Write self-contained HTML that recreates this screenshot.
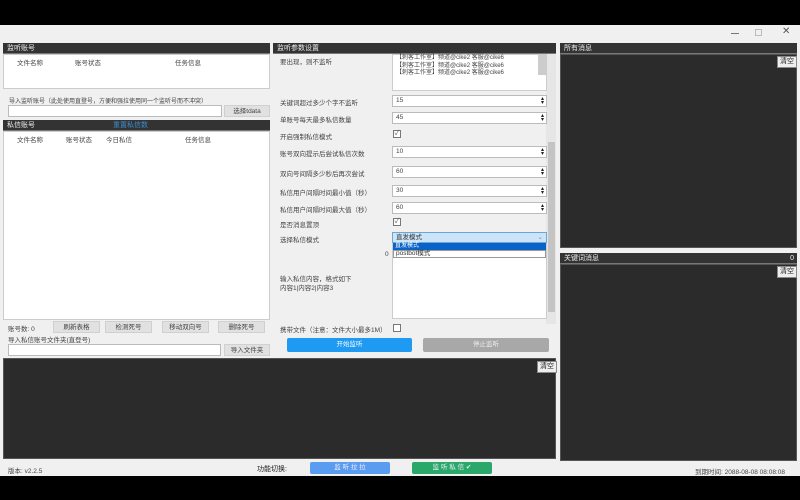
<!DOCTYPE html>
<html><head><meta charset="utf-8"><style>
*{margin:0;padding:0;box-sizing:border-box}
body{width:800px;height:500px;background:#000;position:relative;overflow:hidden;font-family:"Liberation Sans","Noto Sans CJK SC",sans-serif;font-size:7px;color:#333}
.a{position:absolute}
.win{left:0;top:25px;width:800px;height:451px;background:#f0f0f0}
.hd{background:#333;color:#eee;font-size:7px;line-height:11px;padding-left:4px;height:11px;border-bottom:1px solid #777}
.wh{background:#fff;border:1px solid #ccc}
.dk{background:#2b2b2b;border:1px solid #555}
.btn{background:#e1e1e1;border:1px solid #d0d0d0;text-align:center;line-height:11px;color:#444;font-size:6.5px}
.inp{background:#fff;border:1px solid #bbb;height:12px;line-height:10px;padding-left:3px;font-size:6.5px;color:#444}
.clr{background:#eee;color:#222;font-size:7px;line-height:10px;padding:0 2px;border:1px solid #888}
.lb{font-size:6.5px;color:#444}
.sp{position:absolute;right:2px;top:1px;font-size:6px;line-height:4px;color:#222}
.cb{width:8px;height:8px;border:1px solid #777;background:#fff;font-size:7px;line-height:6px;text-align:center;color:#555}
</style></head><body>
<div class="a win"></div>
<div class="a" style="left:731px;top:33px;width:8px;border-top:1px solid #777"></div>
<div class="a" style="left:755px;top:29px;width:7px;height:7px;border:1px solid #bbb"></div>
<div class="a" style="left:782px;top:26px;font-size:10px;color:#555">✕</div>

<!-- left -->
<div class="a hd" style="left:3px;top:43px;width:267px">监听账号</div>
<div class="a wh" style="left:3px;top:54px;width:267px;height:35px"></div>
<div class="a lb" style="left:17px;top:57px">文件名称</div>
<div class="a lb" style="left:75px;top:57px">账号状态</div>
<div class="a lb" style="left:175px;top:57px">任务信息</div>
<div class="a lb" style="left:9px;top:96px;font-size:6px">导入监听账号（此处使用直登号，方便和强拉使用同一个监听号而不冲突）</div>
<div class="a inp" style="left:8px;top:105px;width:214px"></div>
<div class="a btn" style="left:224px;top:105px;width:46px;height:12px">选择tdata</div>
<div class="a hd" style="left:3px;top:120px;width:267px">私信账号<span style="color:#3a8fd0;margin-left:78px">重置私信数</span></div>
<div class="a wh" style="left:3px;top:131px;width:267px;height:189px"></div>
<div class="a lb" style="left:17px;top:134px">文件名称</div>
<div class="a lb" style="left:66px;top:134px">账号状态</div>
<div class="a lb" style="left:106px;top:134px">今日私信</div>
<div class="a lb" style="left:185px;top:134px">任务信息</div>
<div class="a lb" style="left:8px;top:323px">账号数: 0</div>
<div class="a btn" style="left:53px;top:321px;width:47px;height:12px">刷新表格</div>
<div class="a btn" style="left:105px;top:321px;width:47px;height:12px">检测死号</div>
<div class="a btn" style="left:162px;top:321px;width:47px;height:12px">移动双向号</div>
<div class="a btn" style="left:218px;top:321px;width:47px;height:12px">删除死号</div>
<div class="a lb" style="left:8px;top:334px">导入私信账号文件夹(直登号)</div>
<div class="a inp" style="left:8px;top:344px;width:213px"></div>
<div class="a btn" style="left:224px;top:344px;width:46px;height:12px">导入文件夹</div>

<!-- bottom log -->
<div class="a dk" style="left:3px;top:358px;width:553px;height:101px"></div>
<div class="a clr" style="left:537px;top:361px">清空</div>

<!-- middle -->
<div class="a hd" style="left:273px;top:43px;width:283px">监听参数设置</div>
<div class="a" style="left:546px;top:54px;width:10px;height:270px;background:#e6e6e6"></div>
<div class="a" style="left:548px;top:142px;width:7px;height:170px;background:#c4c4c4"></div>
<div class="a lb" style="left:280px;top:56px">要出现，则不监听</div>
<div class="a wh" style="left:392px;top:54px;width:155px;height:37px;font-size:6px;line-height:7.5px;padding-left:3px;color:#444">【刺客工作室】频道@cike2 客服@cike6<br>【刺客工作室】频道@cike2 客服@cike6<br>【刺客工作室】频道@cike2 客服@cike6</div>
<div class="a" style="left:538px;top:55px;width:8px;height:20px;background:#ccc"></div>

<div class="a lb" style="left:280px;top:97px">关键词超过多少个字不监听</div>
<div class="a inp" style="left:392px;top:95px;width:155px">15<span class="sp">▴<br>▾</span></div>
<div class="a lb" style="left:280px;top:114px">单账号每天最多私信数量</div>
<div class="a inp" style="left:392px;top:112px;width:155px">45<span class="sp">▴<br>▾</span></div>
<div class="a lb" style="left:280px;top:131px">开启强制私信模式</div>
<div class="a cb" style="left:393px;top:130px">✓</div>
<div class="a lb" style="left:280px;top:148px">账号双向提示后尝试私信次数</div>
<div class="a inp" style="left:392px;top:146px;width:155px">10<span class="sp">▴<br>▾</span></div>
<div class="a lb" style="left:280px;top:168px">双向号间隔多少秒后再次尝试</div>
<div class="a inp" style="left:392px;top:166px;width:155px">60<span class="sp">▴<br>▾</span></div>
<div class="a lb" style="left:280px;top:187px">私信用户间隔时间最小值（秒）</div>
<div class="a inp" style="left:392px;top:185px;width:155px">30<span class="sp">▴<br>▾</span></div>
<div class="a lb" style="left:280px;top:204px">私信用户间隔时间最大值（秒）</div>
<div class="a inp" style="left:392px;top:202px;width:155px">60<span class="sp">▴<br>▾</span></div>
<div class="a lb" style="left:280px;top:219px">是否消息置顶</div>
<div class="a cb" style="left:393px;top:218px">✓</div>
<div class="a lb" style="left:280px;top:234px">选择私信模式</div>
<div class="a wh" style="left:392px;top:243px;width:155px;height:76px"></div>
<div class="a" style="left:392px;top:232px;width:155px;height:11px;background:#cce4f7;border:1px solid #6aa7d8;font-size:6.5px;line-height:9px;padding-left:3px">直发模式<span style="position:absolute;right:3px;color:#888">⌄</span></div>
<div class="a" style="left:393px;top:243px;width:153px;height:7px;background:#0a64c8;color:#fff;font-size:6px;line-height:7px;padding-left:2px">直发模式</div>
<div class="a" style="left:393px;top:250px;width:153px;height:8px;border:1px solid #999;font-size:6.5px;line-height:6px;padding-left:2px;color:#333">postbot模式</div>
<div class="a lb" style="left:385px;top:251px">0</div>
<div class="a lb" style="left:280px;top:275px;line-height:9px">输入私信内容，格式如下<br>内容1|内容2|内容3</div>
<div class="a lb" style="left:280px;top:324px">携带文件（注意：文件大小最多1M）</div>
<div class="a cb" style="left:393px;top:324px"></div>
<div class="a" style="left:287px;top:338px;width:125px;height:14px;background:#1e9af2;border-radius:2px;color:#fff;text-align:center;line-height:14px;font-size:6.5px">开始监听</div>
<div class="a" style="left:423px;top:338px;width:126px;height:14px;background:#a8a8a8;border-radius:2px;color:#eee;text-align:center;line-height:14px;font-size:6.5px">停止监听</div>

<!-- right -->
<div class="a hd" style="left:560px;top:43px;width:237px">所有消息</div>
<div class="a dk" style="left:560px;top:54px;width:237px;height:194px"></div>
<div class="a clr" style="left:777px;top:56px">清空</div>
<div class="a hd" style="left:560px;top:253px;width:237px">关键词消息<span style="position:absolute;right:3px">0</span></div>
<div class="a dk" style="left:560px;top:264px;width:237px;height:197px"></div>
<div class="a clr" style="left:777px;top:266px">清空</div>

<!-- status -->
<div class="a lb" style="left:8px;top:465px">版本: v2.2.5</div>
<div class="a" style="left:257px;top:464px;font-size:7px;color:#222">功能切换:</div>
<div class="a" style="left:310px;top:462px;width:80px;height:12px;background:#5a9cf0;border-radius:2px;color:#eef;text-align:center;line-height:12px;font-size:6.5px">监 听 拉 拉</div>
<div class="a" style="left:412px;top:462px;width:80px;height:12px;background:#2aa86a;border-radius:2px;color:#eef;text-align:center;line-height:12px;font-size:6.5px">监 听 私 信 ✔</div>
<div class="a lb" style="left:695px;top:466px">到期时间: 2088-08-08 08:08:08</div>
</body></html>
